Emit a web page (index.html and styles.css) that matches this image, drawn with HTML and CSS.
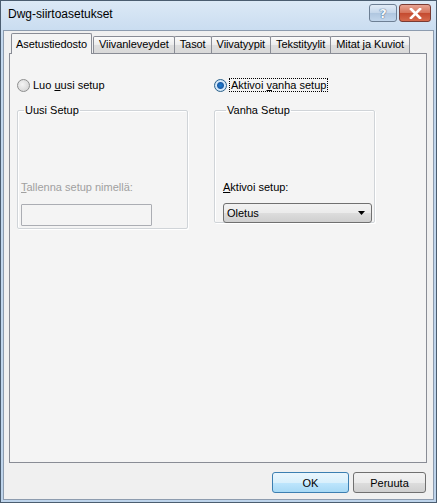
FILE: index.html
```html
<!DOCTYPE html>
<html lang="fi">
<head>
  <meta charset="UTF-8">
  <title>Dwg-siirtoasetukset</title>
  <link rel="stylesheet" href="styles.css">
</head>
<body>
  <div class="window">
    <div class="titlebar">
      <span class="title">Dwg-siirtoasetukset</span>
      <div class="caption">
        <span class="cap-btn help">?</span>
        <span class="cap-btn close">
          <svg width="13" height="11" viewBox="0 0 13 11">
            <path d="M2 1 L11 10 M11 1 L2 10" stroke="#fff" stroke-width="2.6" stroke-linecap="square"/>
          </svg>
        </span>
      </div>
    </div>

    <div class="client">
      <div class="tabs">
        <span class="tab active">Asetustiedosto</span>
        <span class="tab">Viivanleveydet</span>
        <span class="tab">Tasot</span>
        <span class="tab">Viivatyypit</span>
        <span class="tab">Tekstityylit</span>
        <span class="tab">Mitat ja Kuviot</span>
      </div>

      <div class="panel">
        <div class="col">
          <label class="radio">
            <span class="dot"></span>
            <span>Luo <u>u</u>usi setup</span>
          </label>
          <fieldset class="group group-left">
            <legend>Uusi Setup</legend>
            <div class="field-label disabled"><u>T</u>allenna setup nimellä:</div>
            <div class="textbox"></div>
          </fieldset>
        </div>

        <div class="col">
          <label class="radio">
            <span class="dot checked"></span>
            <span class="focus">Aktivoi <u>v</u>anha setup</span>
          </label>
          <fieldset class="group group-right">
            <legend>Vanha Setup</legend>
            <div class="field-label"><u>A</u>ktivoi setup:</div>
            <div class="combo">
              <span>Oletus</span>
              <svg width="7" height="4" viewBox="0 0 7 4"><path d="M0 0 H7 L3.5 4 Z" fill="#000"/></svg>
            </div>
          </fieldset>
        </div>
      </div>

      <div class="footer">
        <button class="btn default">OK</button>
        <button class="btn">Peruuta</button>
      </div>
    </div>
  </div>
</body>
</html>
```

FILE: styles.css
```css
body {
  margin: 0;
  font-family: "Liberation Sans", Arial, sans-serif;
  font-size: 11px;
  color: #000;
  background: #fff;
}

.window {
  width: 437px;
  height: 503px;
  box-sizing: border-box;
  display: flex;
  flex-direction: column;
  border: 1px solid #4b5d70;
  background: linear-gradient(#dce9f6, #c3d8ee 40px, #bed4eb);
  padding: 0 2px 2px 2px;
}

.titlebar {
  height: 29px;
  display: flex;
  align-items: flex-start;
  justify-content: space-between;
}

.title {
  font-size: 12px;
  margin: 6px 0 0 5px;
  color: #000;
}

.caption {
  display: flex;
  margin-top: 3px;
  margin-right: 3px;
}

.cap-btn {
  height: 18px;
  box-sizing: border-box;
  border: 1px solid #6d7f94;
  border-radius: 3px;
  display: flex;
  align-items: center;
  justify-content: center;
}

.help {
  width: 28px;
  margin-right: 2px;
  color: #f4f8fc;
  font-family: "DejaVu Sans", sans-serif;
  font-weight: bold;
  font-size: 13px;
  text-shadow: 0 0 1px #3a5a80, 0 0 1px #3a5a80;
  background: linear-gradient(#e2ecf7, #c4d6ea 50%, #afc6df 51%, #c2d6ec);
}

.close {
  width: 32px;
  border-color: #7a3b33;
  background: linear-gradient(#e8a493, #d57259 50%, #c44a2f 51%, #d5694c);
}

.client {
  flex: 1;
  background: #f0f0f0;
  border: 1px solid #8d9caf;
  padding: 1px 6px 0 5px;
  display: flex;
  flex-direction: column;
}

.tabs {
  display: flex;
  align-items: flex-end;
  height: 21px;
  padding-left: 4px;
  position: relative;
  z-index: 1;
}

.tab {
  height: 16px;
  line-height: 15px;
  padding: 0 5px;
  margin-right: -1px;
  border: 1px solid #898c95;
  border-bottom: none;
  border-radius: 2px 2px 0 0;
  background: linear-gradient(#fbfbfb, #ececec 50%, #dedede 51%, #d9d9d9);
  white-space: nowrap;
  letter-spacing: -0.08px;
}

.tab.active {
  height: 20px;
  line-height: 20px;
  padding: 0 4px;
  margin-left: -2px;
  margin-right: 1px;
  background: #f4f4f4;
  position: relative;
  top: 1px;
}

.panel {
  height: 410px;
  box-sizing: border-box;
  border: 1px solid #898c95;
  background: #f4f4f4;
  padding: 24px 0 0 7px;
  display: grid;
  grid-template-columns: 197px 170px;
  align-items: start;
}

.radio {
  display: flex;
  align-items: center;
  height: 14px;
  gap: 3px;
}

.dot {
  width: 11px;
  height: 11px;
  border-radius: 50%;
  border: 1px solid #8e8f8f;
  background: radial-gradient(circle at 40% 40%, #f4f4f4, #cfcfcf);
  box-sizing: content-box;
}

.dot.checked {
  border-color: #2c628b;
  background: radial-gradient(circle, #1a7fd4 0, #1e5ea8 3px, #d8eaf9 4px, #bcd7ef);
}

.focus {
  outline: 1px dotted #000;
  outline-offset: 0;
  padding: 0 1px;
}

.group {
  margin: 12px 0 0 0;
  padding: 0 0 0 3px;
  border: 1px solid #d0d4d8;
  border-radius: 2px;
  box-shadow: inset 1px 1px 0 #fff, 1px 1px 0 #fff;
}

.group legend {
  padding: 0 1px;
  margin-left: 3px;
  color: #000;
}

.group-left {
  width: 171px;
  height: 125px;
  box-sizing: border-box;
  padding-top: 65px;
}

.group-right {
  width: 161px;
  height: 119px;
  box-sizing: border-box;
  padding-top: 65px;
  padding-left: 8px;
}

.field-label {
  height: 13px;
  margin-bottom: 9px;
}

.field-label.disabled {
  color: #a0a0a0;
  margin-bottom: 10px;
}

.textbox {
  width: 131px;
  height: 22px;
  box-sizing: border-box;
  border: 1px solid #abadb3;
  border-radius: 1px;
  background: #f4f4f4;
}

.combo {
  width: 149px;
  height: 20px;
  box-sizing: border-box;
  border: 1px solid #707070;
  border-radius: 3px;
  background: linear-gradient(#f2f2f2, #ebebeb 50%, #dddddd 51%, #cfcfcf);
  display: flex;
  align-items: center;
  justify-content: space-between;
  padding: 0 6px 0 3px;
}

.footer {
  flex: 1;
  display: flex;
  justify-content: flex-end;
  align-items: flex-start;
  gap: 4px;
  padding-top: 9px;
  padding-right: 1px;
}

.btn {
  width: 73px;
  height: 21px;
  font-family: "Liberation Sans", Arial, sans-serif;
  font-size: 11px;
  color: #000;
  border: 1px solid #707070;
  border-radius: 3px;
  background: linear-gradient(#f2f2f2, #ebebeb 50%, #dddddd 51%, #cfcfcf);
  padding: 0;
}

.btn.default {
  width: 77px;
  border-color: #3c7fb1;
  background: linear-gradient(#eaf6fd, #d9f0fc 50%, #bee6fd 51%, #a7d9f5);
}
```
